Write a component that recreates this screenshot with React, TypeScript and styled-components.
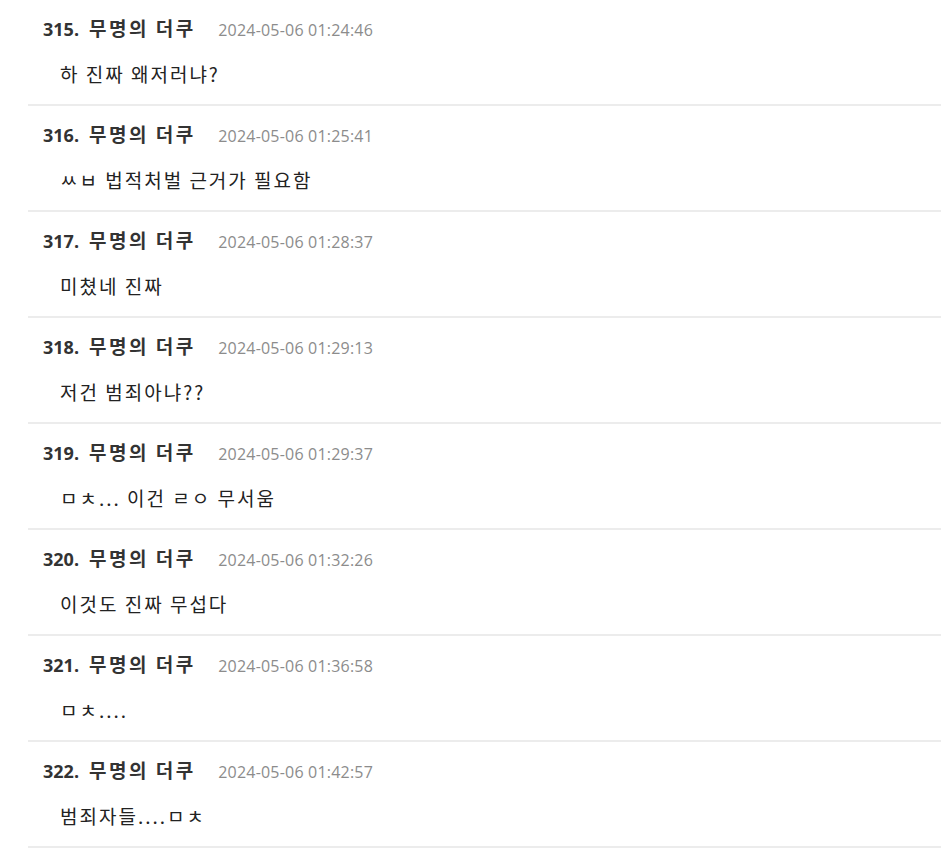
import React from "react";
import styled, { createGlobalStyle } from "styled-components";

const Global = createGlobalStyle`
  html, body { margin: 0; padding: 0; background: #fff; }
  body { font-family: "Open Sans", "Noto Sans CJK KR", sans-serif; }
`;

const List = styled.ul`
  list-style: none;
  margin: 0 0 0 28px;
  padding: 0;
`;

const Item = styled.li`
  height: 104px;
  border-bottom: 2px solid #ececec;
  padding: 0 15px;
  box-sizing: content-box;
  display: flex;
  flex-direction: column;
`;

const Header = styled.div`
  display: flex;
  align-items: baseline;
  gap: 25px;
  padding-top: 12px;
  height: 32px;
`;

const Name = styled.span`
  font-family: "Open Sans", "Noto Sans CJK KR", sans-serif;
  font-weight: 700;
  font-size: 18px;
  color: #333;
  line-height: 32px;
  white-space: nowrap;
`;

const Nick = styled.span`
  font-family: "Noto Sans CJK KR", sans-serif;
  font-size: 19px;
  letter-spacing: 2.5px;
  margin-left: 10px;
  margin-right: -2.5px;
`;

const Date = styled.span`
  font-family: "Open Sans", sans-serif;
  font-size: 16px;
  letter-spacing: 0.2px;
  color: #8c8c8c;
`;

const Body = styled.div`
  padding-left: 17px;
  margin-top: 16px;
  font-family: "Noto Sans CJK KR", sans-serif;
  font-size: 19px;
  letter-spacing: 2px;
  line-height: 28px;
  color: #222;
`;

const comments = [
  { n: 315, d: "2024-05-06 01:24:46", t: "하 진짜 왜저러냐?" },
  { n: 316, d: "2024-05-06 01:25:41", t: "ㅆㅂ 법적처벌 근거가 필요함" },
  { n: 317, d: "2024-05-06 01:28:37", t: "미쳤네 진짜" },
  { n: 318, d: "2024-05-06 01:29:13", t: "저건 범죄아냐??" },
  { n: 319, d: "2024-05-06 01:29:37", t: "ㅁㅊ... 이건 ㄹㅇ 무서움" },
  { n: 320, d: "2024-05-06 01:32:26", t: "이것도 진짜 무섭다" },
  { n: 321, d: "2024-05-06 01:36:58", t: "ㅁㅊ...." },
  { n: 322, d: "2024-05-06 01:42:57", t: "범죄자들....ㅁㅊ" },
];

export default function App() {
  return (
    <>
      <Global />
      <List>
        {comments.map((c) => (
          <Item key={c.n}>
            <Header>
              <Name>
                {c.n}.<Nick>무명의 더쿠</Nick>
              </Name>
              <Date>{c.d}</Date>
            </Header>
            <Body>{c.t}</Body>
          </Item>
        ))}
      </List>
    </>
  );
}
